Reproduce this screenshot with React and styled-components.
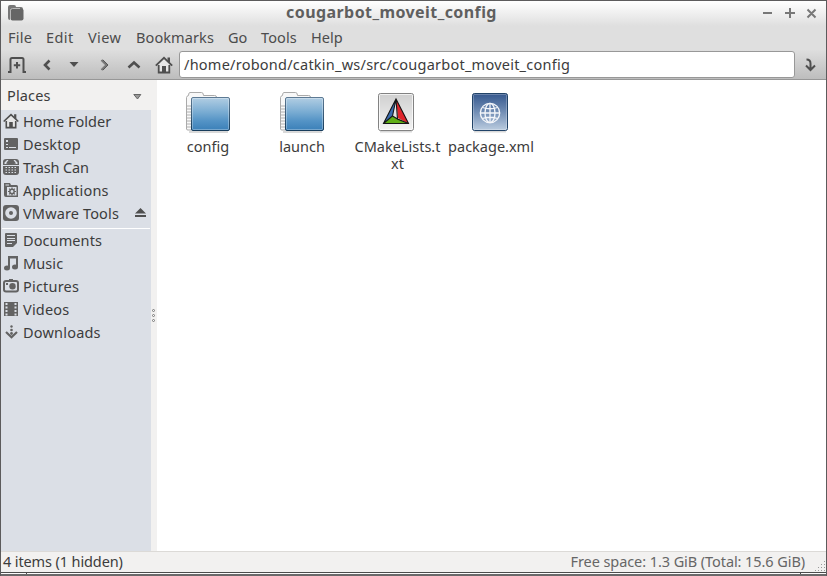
import React from "react";
import styled, { createGlobalStyle } from "styled-components";

const Global = createGlobalStyle`
  * { box-sizing: border-box; }
  html, body { margin: 0; padding: 0; overflow: hidden; background: #fff; }
  svg { display: block; flex: none; }
`;

const Window = styled.div`
  width: 827px;
  height: 576px;
  display: flex;
  flex-direction: column;
  background: #f2f1f0;
  border: 1px solid #5c5b5c;
  border-bottom: 0;
  font: 14.5px/18px "Noto Sans", sans-serif;
  color: #3c3c3c;
  white-space: nowrap;
`;

const TitleBar = styled.header`
  height: 25px;
  display: grid;
  grid-template-columns: 60px 1fr 64px;
  align-items: center;
  background: linear-gradient(#ffffff, #dfdfdf);
`;

const AppIcon = styled.div`
  padding: 0 0 1px 7px;
`;

const Title = styled.h1`
  margin: 0 0 3px;
  padding-right: 40px;
  text-align: center;
  font: bold 16px/20px "Noto Sans", sans-serif;
  color: #5f5f5f;
  letter-spacing: 0.42px;
`;

const MenuBar = styled.nav`
  height: 24px;
  display: flex;
  background: #dfdfdf;
`;

const MenuItem = styled.span`
  width: ${(p) => p.$width}px;
  padding-left: 7px;
  line-height: 22px;
  letter-spacing: ${(p) => p.$track || 0}px;
  color: #4c4c4c;
`;

const ToolBar = styled.div`
  height: 30px;
  display: flex;
  background: linear-gradient(#dedede, #bdbdbd);
  border-bottom: 1px solid #979797;
`;

const ToolButton = styled.div`
  width: ${(p) => p.$width || 30}px;
  height: 29px;
  display: flex;
  align-items: center;
  justify-content: center;
`;

const PathField = styled.div`
  width: 616px;
  height: 27px;
  margin-top: 1px;
  padding-left: 4px;
  line-height: 24px;
  background: #fff;
  border: 1px solid #989898;
  border-radius: 3px;
  letter-spacing: 0.24px;
`;

const Body = styled.main`
  flex: 1;
  display: flex;
  min-height: 0;
`;

const SidePane = styled.aside`
  width: 150px;
  display: flex;
  flex-direction: column;
`;

const PlacesHeader = styled.div`
  height: 30px;
  display: flex;
  align-items: center;
  justify-content: space-between;
  padding: 2px 9px 2px 6px;
`;

const HeaderArrow = styled.div`
  padding-top: 3px;
`;

const PlacesList = styled.div`
  flex: 1;
  background: #dbdfe6;
`;

const PlaceRow = styled.div`
  height: 23px;
  display: flex;
  align-items: center;
  padding: 0 5px 1px 2px;
`;

const PlaceName = styled.span`
  flex: 1;
  padding: 0 0 1px 4px;
  letter-spacing: ${(p) => p.$track || 0}px;
`;

const Divider = styled.div`
  height: 1px;
  margin: 3px 1px 0;
  background: #fff;
`;

const Handle = styled.div`
  width: 6px;
  display: flex;
  flex-direction: column;
  justify-content: center;
`;

const Files = styled.section`
  flex: 1;
  display: flex;
  align-items: flex-start;
  padding: 12px 0 0 4px;
  background: #fff;
`;

const FileItem = styled.div`
  width: 94px;
  display: flex;
  flex-direction: column;
  align-items: center;
`;

const FileName = styled.div`
  width: 90px;
  margin-top: 3px;
  padding-left: ${(p) => p.$indent || 0}px;
  line-height: 17px;
  text-align: center;
  white-space: normal;
  word-break: break-all;
`;

const StatusBar = styled.footer`
  height: 21px;
  display: flex;
  justify-content: space-between;
  padding-left: 2px;
  line-height: 19px;
  border-top: 1px solid #dcdad7;
`;

const StatusText = styled.span`
  line-height: 19px;
  letter-spacing: ${(p) => p.$track || 0}px;
  color: ${(p) => (p.$muted ? "#666" : "#3c3c3c")};
`;

const StatusEnd = styled.div`
  display: flex;
  align-items: flex-start;
  gap: 9px;
`;

const Grip = styled.div`
  padding-top: 8px;
`;

const BottomFrame = styled.div`
  height: 4px;
  display: flex;
  justify-content: space-between;
  padding: 0 25px;
  border-top: 1px solid #4c4c4c;
  border-bottom: 2px solid #6a696a;
  background: #fbfbfb;
`;

const FrameTick = styled.span`
  width: 1px;
  background: #4c4c4c;
`;

const DARK = "#4f4f4f";
const GREY = "#636363";
const PANE = "#dbdfe6";

const Folder = () => (
  <svg width="46" height="43" viewBox="0 0 46 43">
    <defs>
      <linearGradient id="blue" x2="0" y2="1"><stop stopColor="#b2cee3" /><stop offset=".45" stopColor="#78abd2" /><stop offset=".7" stopColor="#5594c6" /><stop offset="1" stopColor="#3a7fb8" /></linearGradient>
      <linearGradient id="blueEdge" x2="0" y2="1"><stop stopColor="#5d7a94" /><stop offset="1" stopColor="#173c5b" /></linearGradient>
    </defs>
    <path d="M4 39h39v2H4z" fill="#000" opacity=".15" />
    <path d="M1.500 37V5.500Q1.500 4 3.500 3.500Q3.500 .5 5 .5H16.500Q18.500 .5 18.500 3.500H29.500Q31.500 3.500 31.500 5V10H7V38H3Q1.500 38 1.500 37z" fill="#f8f8f8" stroke="#aaa" />
    <path d="M2 14h4M2 17h4M2 20h4M2 23h4M2 26h4M2 29h4M2 32h4M2 35h4" stroke="#c8c8c8" strokeWidth="1.500" />
    <rect x="6.500" y="5.500" width="38" height="33" rx="1.500" fill="url(#blue)" stroke="url(#blueEdge)" />
    <rect x="7.500" y="6.500" width="36" height="31" rx="1" fill="none" stroke="#fff" opacity=".3" />
  </svg>
);

const CMake = () => (
  <svg width="38" height="43" viewBox="0 0 38 43">
    <defs><linearGradient id="paper" x2="0" y2="1"><stop stopColor="#cfcfcf" /><stop offset="1" stopColor="#f4f4f4" /></linearGradient></defs>
    <path d="M3 38h32v2.500H3z" opacity=".15" />
    <rect x="1.500" y="1.500" width="35" height="37" rx="2" fill="url(#paper)" stroke="#828282" />
    <rect x="2.500" y="2.500" width="33" height="35" rx="1" fill="none" stroke="#fff" opacity=".7" />
    <path d="M19 7L6 32L17 23z" fill="#3a6cb0" />
    <path d="M19 7L32 32L21 26z" fill="#e0252c" />
    <path d="M6 32L15.500 24L32 32z" fill="#5fae17" />
    <path d="M18.500 10L20.500 27L15.500 24z" fill="#e6e6e6" />
    <path d="M19 7L6.500 31.500H31.500zM19 7L15.500 24L6.500 31.500M19 7L20.500 27L31.500 31.500M15.500 24L20.500 27" fill="none" stroke="#151515" strokeWidth="1.100" />
  </svg>
);

const XmlFile = () => (
  <svg width="38" height="43" viewBox="0 0 38 43">
    <defs><linearGradient id="navy" x2="0" y2="1"><stop stopColor="#34578d" /><stop offset=".5" stopColor="#728eb5" /><stop offset="1" stopColor="#bccde0" /></linearGradient></defs>
    <path d="M3 38h32v2.500H3z" opacity=".15" />
    <rect x="1.500" y="1.500" width="35" height="37" rx="2" fill="url(#navy)" stroke="#214368" />
    <rect x="2.500" y="2.500" width="33" height="35" rx="1" fill="none" stroke="#fff" opacity=".25" />
    <g fill="none" stroke="#f4f6fa" strokeWidth="1.300"><circle cx="19" cy="21" r="9.700" /><ellipse cx="19" cy="21" rx="5" ry="9.700" /><path d="M19 11.500v19M9.500 21h19M11.500 15.500q7.500 2.500 15 0M11.500 26.500q7.500-2.500 15 0" /></g>
  </svg>
);

const House = ({ size = 18 }) => (
  <svg width={size} height={size} viewBox="0 0 18 18">
    <path d="M3 9v8h12V9L9 3z" fill="#e6e6e6" />
    <path d="M3.700 9v7.500h10.600V9M.8 9.600L9 1.800l8.200 7.800" fill="none" stroke={DARK} strokeWidth="1.800" />
    <path d="M12.500 1.500H15V7l-2.500-2zM7 10h4v6H7z" fill={DARK} />
  </svg>
);

const placeIcons = {
  desktop: <><path fill={GREY} d="M2 2h12q1 0 1 1v10q0 1-1 1H2q-1 0-1-1V3q0-1 1-1z" /><path d="M3 4h2v2H3zM3 8h2v1H3zM3 11h2v1H3zM6 11h7v1H6z" fill={PANE} /></>,
  trash: <><path fill={GREY} d="M0 6V3q0-3 3-3h10q3 0 3 3v3z" /><path fill={PANE} d="M1.500 5V3.500L4 1h1.500L3 4.500 5 5zM14.500 5V3.500L12 1h-1.500L13 4.500 11 5z" /><path fill={GREY} d="M0 7h16v6q0 3-3 3H3q-3 0-3-3z" /><path stroke={PANE} strokeWidth="1.200" strokeDasharray="1.500 1.500" d="M2.500 8.500h12M2.500 11h12M2.500 13.500h12" /></>,
  apps: <><path fill={GREY} d="M1 1h6l1 2h5.500q1.500 0 1.500 1.500V15H3q-2 0-2-2z" /><path fill={PANE} d="M4 5h9.500v8.500H4zM2.500 2.500H6v1H2.500z" /><path stroke={GREY} strokeWidth="1.200" d="M9 5.500v8M5 9.500h8M6.200 6.700l5.600 5.600M11.800 6.700l-5.600 5.600" /><circle cx="9" cy="9.500" r="2.900" fill={GREY} /><circle cx="9" cy="9.500" r="1.400" fill={PANE} /></>,
  disk: <><rect width="16" height="16" rx="3" fill={GREY} /><circle cx="8" cy="8" r="5.800" fill={PANE} /><circle cx="8" cy="8" r="2" fill={GREY} /></>,
  docs: <><path fill={GREY} d="M3 1h10q1 0 1 1v9l-4 4H3q-1 0-1-1V2q0-1 1-1z" /><path stroke={PANE} d="M4 3.500h8M4 6.500h8M4 8.500h8M4 11.500h5" /></>,
  music: <><path fill={GREY} d="M5 1h10v11h-2V3.500H7V13H5z" /><ellipse cx="4" cy="13" rx="3" ry="2.500" fill={GREY} /><ellipse cx="12" cy="12" rx="3" ry="2.500" fill={GREY} /></>,
  pictures: <><path fill={GREY} d="M6 1h4v2H6z" /><rect x="1" y="3" width="14" height="10.500" rx="2" fill="none" stroke={GREY} strokeWidth="2" /><circle cx="9.500" cy="8.200" r="3.200" fill={GREY} /><path fill={GREY} d="M3 5h2v2H3z" /></>,
  videos: <><path fill={GREY} d="M1 1h14v14H1z" /><path stroke={PANE} strokeWidth="2" strokeDasharray="2 1.500" d="M3.500 2v13M12.500 2v13" /></>,
  downloads: <><path fill="none" stroke={GREY} strokeWidth="2.200" d="M3 8l5.500 5.200L14 8" /><circle cx="8.500" cy="2.500" r="1.200" fill={GREY} /><circle cx="8.500" cy="6" r="1.300" fill={GREY} /><circle cx="8.500" cy="9.500" r="1.400" fill={GREY} /></>,
};

const Place = ({ icon, name, track, children }) => (
  <PlaceRow>
    {icon === "home" ? <House size={16} /> : <svg width="16" height="16" viewBox="0 0 16 16">{placeIcons[icon]}</svg>}
    <PlaceName $track={track}>{name}</PlaceName>
    {children}
  </PlaceRow>
);

const Stroke = ({ d, width = 2 }) => (
  <svg width="16" height="16" viewBox="0 0 16 16"><path d={d} fill="none" stroke={DARK} strokeWidth={width} /></svg>
);

export default function App() {
  return (
    <Window>
      <Global />
      <TitleBar>
        <AppIcon>
          <svg width="16" height="16" viewBox="0 0 16 16">
            <path d="M0 13V2Q0 0 2 0h4q2 0 2 2h5q2 0 2 2H4Q2 4 2 6v9Q0 15 0 13z" fill="#777" />
            <rect x="2.500" y="3.500" width="13" height="12" rx="2" fill="#666" />
            <path d="M2.500 14V5.500q0-2 2-2H12" fill="none" stroke="#b8b8b8" />
          </svg>
        </AppIcon>
        <Title>cougarbot_moveit_config</Title>
        <svg width="56" height="12" viewBox="0 0 56 12"><path d="M1 5h9M23 5h10M28 0v10M45.500 1.500l8 8M53.500 1.500l-8 8" stroke="#777" strokeWidth="2" /></svg>
      </TitleBar>
      <MenuBar>
        <MenuItem $width={38} $track={0.25}>File</MenuItem>
        <MenuItem $width={42} $track={0.4}>Edit</MenuItem>
        <MenuItem $width={48} $track={0.4}>View</MenuItem>
        <MenuItem $width={92} $track={0.1}>Bookmarks</MenuItem>
        <MenuItem $width={33}>Go</MenuItem>
        <MenuItem $width={50} $track={0.1}>Tools</MenuItem>
        <MenuItem $width={50}>Help</MenuItem>
      </MenuBar>
      <ToolBar>
        <ToolButton $width={32}>
          <svg width="18" height="18" viewBox="0 0 18 18"><path d="M0 16h2.500V3.500Q2.500 2 4 2h10q1.500 0 1.500 1.500V16H18" fill="none" stroke={DARK} strokeWidth="2" /><path d="M9 6v6.500M5.800 9.200h6.400" stroke={DARK} strokeWidth="2" /></svg>
        </ToolButton>
        <ToolButton $width={28}><Stroke d="M10.500 3.500L6 8l4.500 4.500" width={2.600} /></ToolButton>
        <ToolButton $width={26}><svg width="10" height="6" viewBox="0 0 10 6"><path d="M.5 0h9L5 5z" fill={DARK} /></svg></ToolButton>
        <ToolButton $width={34}>
          <svg width="16" height="16" viewBox="0 0 16 16">
            <path d="M5.500 3l5 5-5 5" fill="none" stroke="#999" strokeWidth="2.600" />
            <path d="M5.500 3l5 5-5 5M7 3l5 5-5 5" fill="none" stroke={DARK} strokeWidth=".9" />
          </svg>
        </ToolButton>
        <ToolButton $width={26}><Stroke d="M2.500 10.500L8 5.500l5.500 5" width={2.600} /></ToolButton>
        <ToolButton $width={32}><svg width="1" height="1" /><House /></ToolButton>
        <PathField>/home/robond/catkin_ws/src/cougarbot_moveit_config</PathField>
        <ToolButton><Stroke d="M4.500 2.500q4 0 4 4v6M4 8.500l4.500 4.500L13 8.500" /></ToolButton>
      </ToolBar>
      <Body>
        <SidePane>
          <PlacesHeader>
            <StatusText $track={0.15}>Places</StatusText>
            <HeaderArrow><svg width="9" height="6" viewBox="0 0 9 6"><path d="M.8 .5h7L4.500 5z" fill="#999" stroke="#666" /></svg></HeaderArrow>
          </PlacesHeader>
          <PlacesList>
            <Place icon="home" name="Home Folder" />
            <Place icon="desktop" name="Desktop" track={0.22} />
            <Place icon="trash" name="Trash Can" track={-0.15} />
            <Place icon="apps" name="Applications" track={0.2} />
            <Place icon="disk" name="VMware Tools" track={0.14}>
              <svg width="11" height="10" viewBox="0 0 11 10"><path d="M0 5.500L5.500 0 11 5.500zM0 7h11v2H0z" fill={DARK} /></svg>
            </Place>
            <Divider />
            <Place icon="docs" name="Documents" track={0.1} />
            <Place icon="music" name="Music" track={0.1} />
            <Place icon="pictures" name="Pictures" track={0.2} />
            <Place icon="videos" name="Videos" track={0.2} />
            <Place icon="downloads" name="Downloads" track={0.2} />
          </PlacesList>
        </SidePane>
        <Handle>
          <svg width="5" height="14" viewBox="0 0 5 14"><g fill="#fff" stroke="#777"><circle cx="2.500" cy="1.500" r="1" /><circle cx="2.500" cy="6.500" r="1" /><circle cx="2.500" cy="11.500" r="1" /></g></svg>
        </Handle>
        <Files>
          <FileItem><Folder /><FileName>config</FileName></FileItem>
          <FileItem><Folder /><FileName>launch</FileName></FileItem>
          <FileItem><CMake /><FileName $indent={3}>CMakeLists.txt</FileName></FileItem>
          <FileItem><XmlFile /><FileName $indent={2}>package.xml</FileName></FileItem>
        </Files>
      </Body>
      <StatusBar>
        <StatusText $track={-0.12}>4 items (1 hidden)</StatusText>
        <StatusEnd>
          <StatusText $muted $track={-0.08}>Free space: 1.3 GiB (Total: 15.6 GiB)</StatusText>
          <Grip><svg width="12" height="12" viewBox="0 0 12 12"><path d="M10 1.500h1M7 4.500h1M10 4.500h1M4 7.500h1M7 7.500h1M10 7.500h1M1 10.500h1M4 10.500h1M7 10.500h1M10 10.500h1" stroke="#999" /></svg></Grip>
        </StatusEnd>
      </StatusBar>
      <BottomFrame><FrameTick /><FrameTick /></BottomFrame>
    </Window>
  );
}
